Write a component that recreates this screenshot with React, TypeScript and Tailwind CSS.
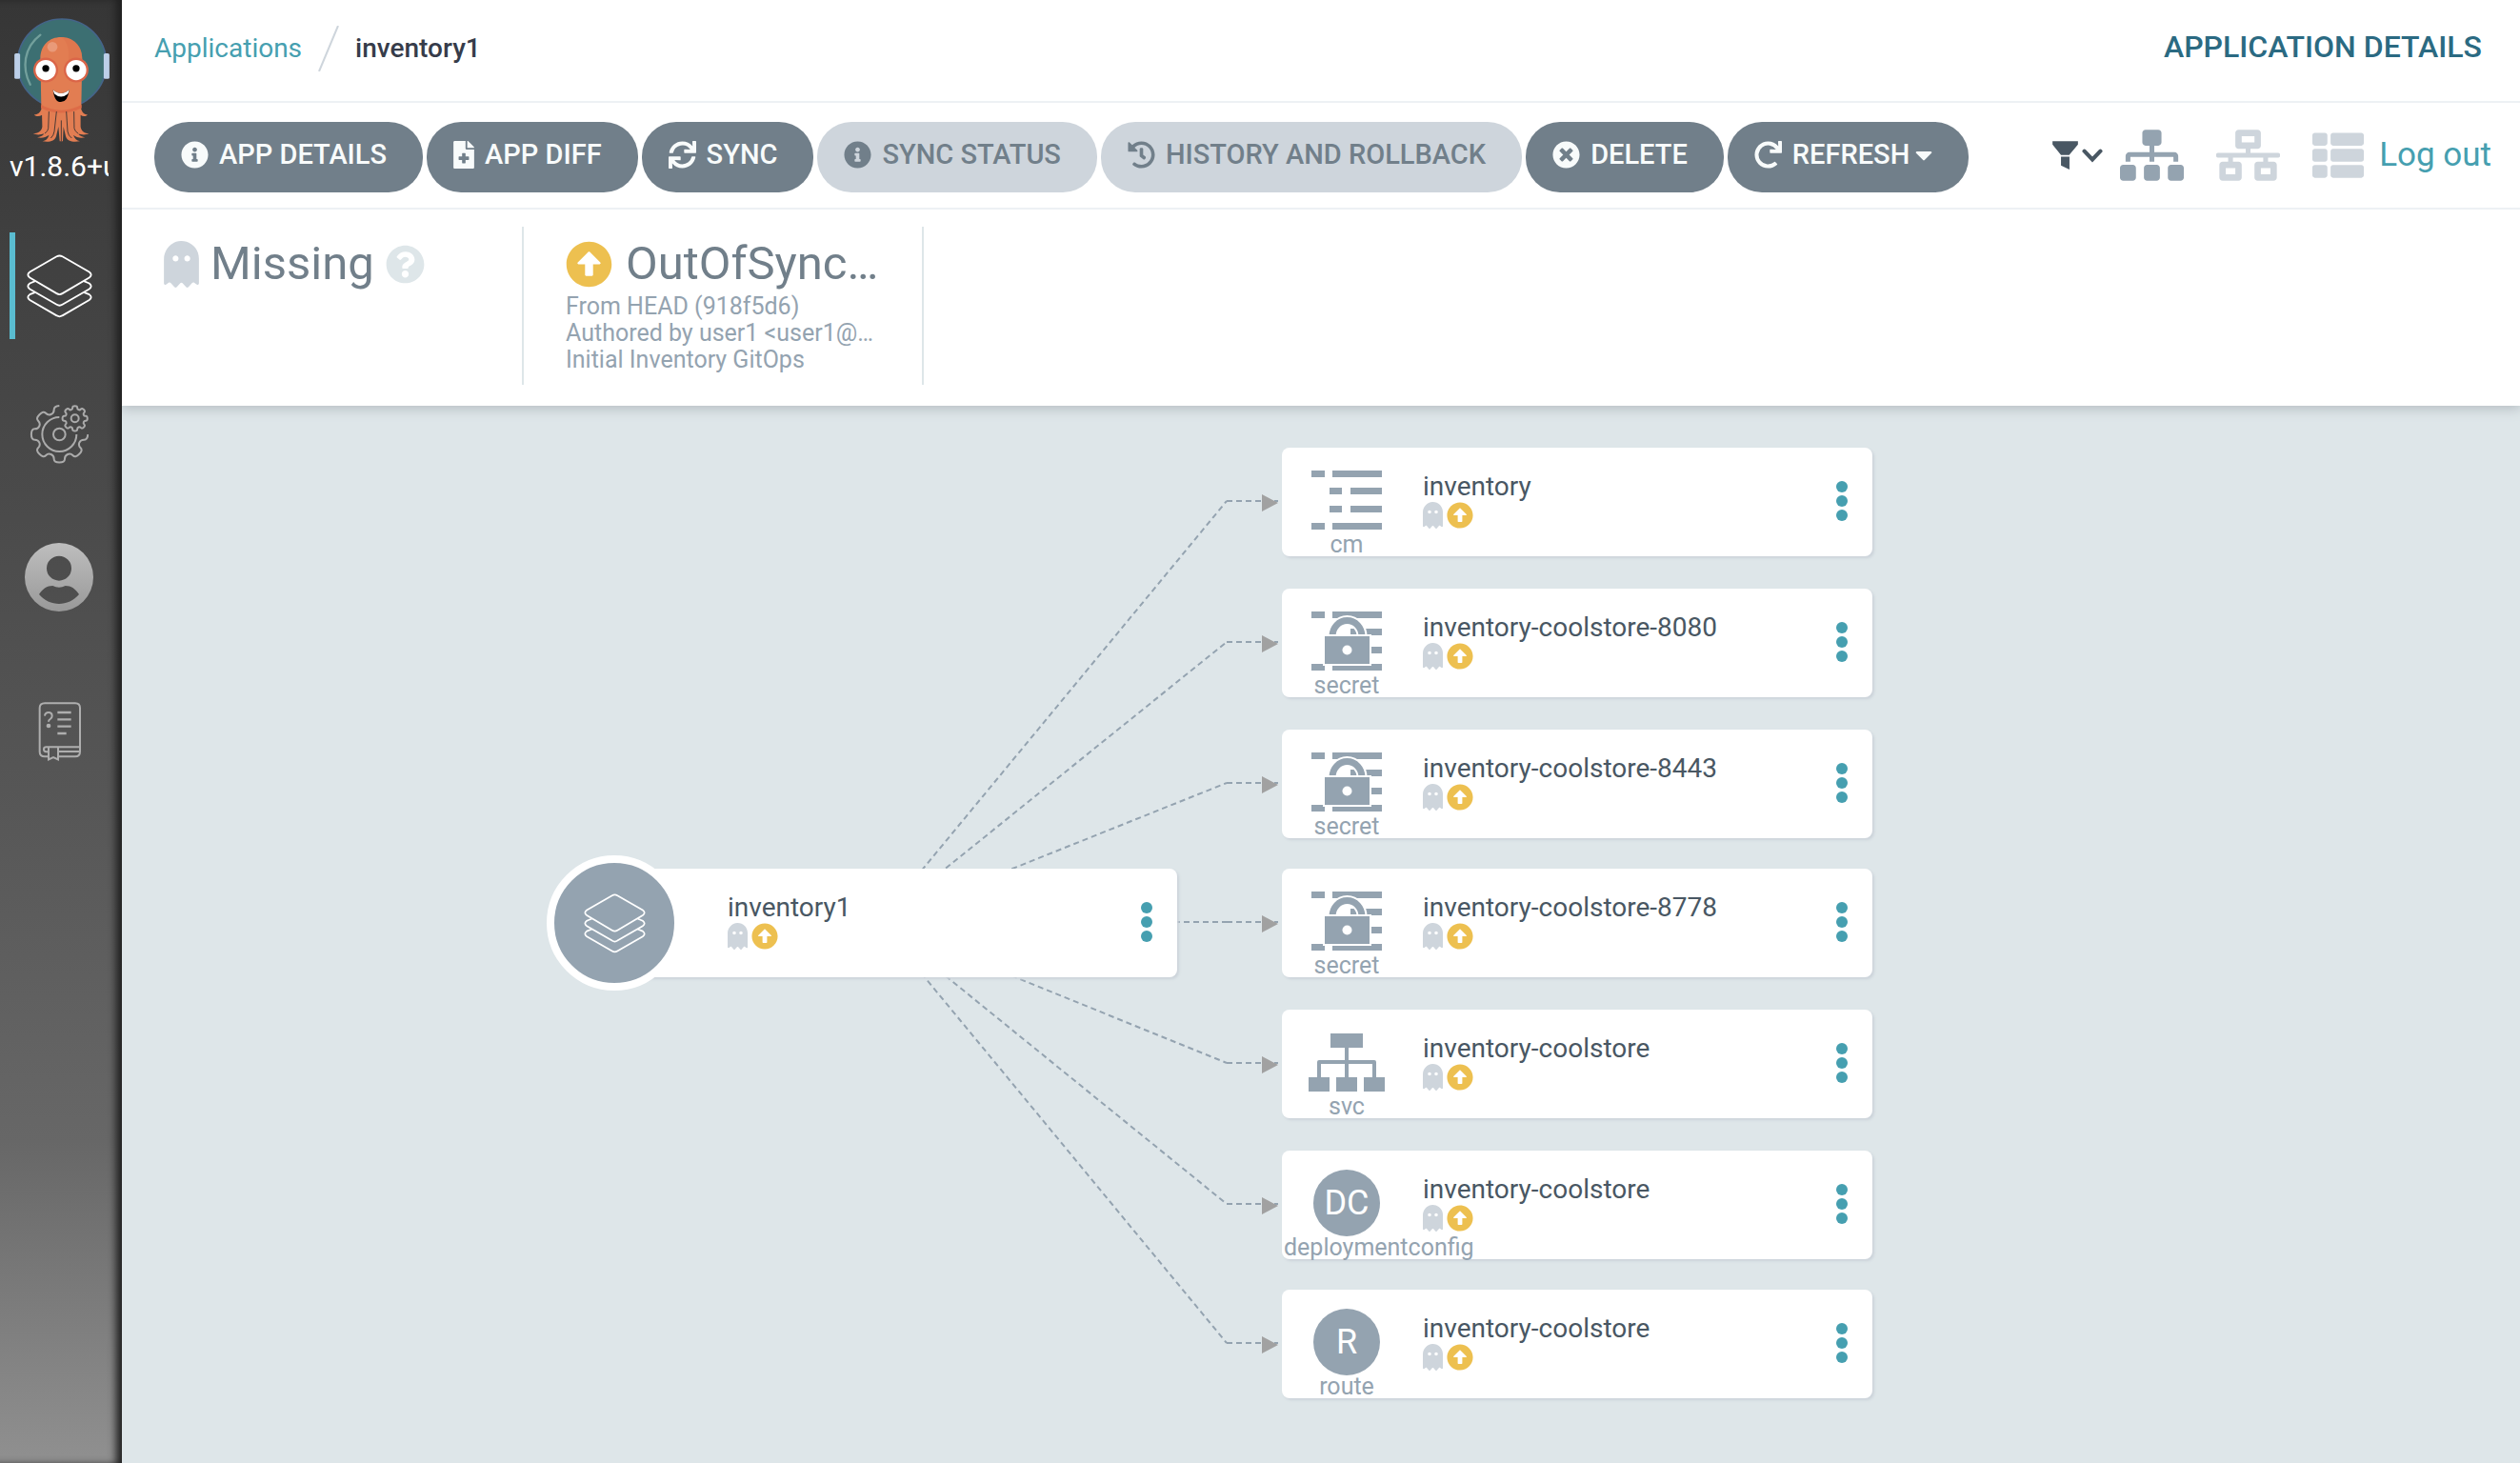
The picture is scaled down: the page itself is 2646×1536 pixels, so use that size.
import React from "react";
import {
  FaArrowAltCircleUp,
  FaCaretDown,
  FaFileMedical,
  FaGhost,
  FaHistory,
  FaInfoCircle,
  FaNetworkWired,
  FaQuestionCircle,
  FaRedo,
  FaSitemap,
  FaSync,
  FaThList,
  FaTimesCircle,
} from "react-icons/fa";

type Kind = "cm" | "secret" | "svc" | "DC" | "R";

interface Resource {
  name: string;
  label: string;
  kind: Kind;
  y: number;
}

const ROOT_X = 795;
const ROOT_Y = 542;
const EDGE_X = 1160;

const resources: Resource[] = [
  { name: "inventory", label: "cm", kind: "cm", y: 44 },
  { name: "inventory-coolstore-8080", label: "secret", kind: "secret", y: 192 },
  { name: "inventory-coolstore-8443", label: "secret", kind: "secret", y: 340 },
  { name: "inventory-coolstore-8778", label: "secret", kind: "secret", y: 486 },
  { name: "inventory-coolstore", label: "svc", kind: "svc", y: 634 },
  { name: "inventory-coolstore", label: "deploymentconfig", kind: "DC", y: 782 },
  { name: "inventory-coolstore", label: "route", kind: "R", y: 928 },
];

function ArgoLogo() {
  return (
    <svg viewBox="45 57 300 394" className="h-[131px] w-[100px] shrink-0" aria-hidden="true">
      <circle cx="195" cy="200" r="140" fill="#3c6f72" stroke="#456489" strokeWidth="5" />
      <path d="M127 110C74 150 68 215 95 267" fill="none" stroke="#73a09c" strokeWidth="7" strokeLinecap="round" />
      <rect x="45" y="168" width="18" height="81" rx="5" fill="#bccfe8" />
      <rect x="327" y="168" width="18" height="81" rx="5" fill="#bccfe8" />
      <path
        d="M127 185C127 142 156 117 192 117S259 142 259 185L256 345C260 356 266 362 276 362C270 368 261 368 254 363L254 400C256 415 268 421 280 422C270 427 256 426 246 422C252 430 260 433 268 434C254 437 240 434 231 426C235 438 242 443 252 446C230 449 212 447 207 430L200 400L198 446H188L184 400L177 430C172 447 154 449 133 446C145 443 151 438 154 426C144 434 132 437 117 434C126 433 134 430 139 422C128 426 116 427 104 422C118 421 131 415 133 400L132 363C124 368 114 368 107 362C118 362 126 356 130 345Z"
        fill="#e27d52"
      />
      <path d="M192 117C230 117 259 142 259 185L257 250L216 250V165C216 145 208 126 192 117Z" fill="#dd734c" opacity="0.6" />
      <path d="M129 331Q192 365 257 331V341Q192 372 129 341Z" fill="#dd6b47" />
      <path d="M154 352L152 405Q151 415 141 421M178 352L171 415Q169 428 160 436M209 352L213 415Q215 428 226 436M233 352L234 405Q236 415 246 421M193 380V446" fill="none" stroke="#4b3a35" strokeWidth="3" />
      <circle cx="165" cy="148" r="16" fill="#e99a79" />
      <circle cx="144" cy="221" r="39" fill="#db6548" />
      <circle cx="240" cy="221" r="39" fill="#db6548" />
      <circle cx="144" cy="221" r="32" fill="#fff" />
      <circle cx="240" cy="221" r="32" fill="#fff" />
      <circle cx="144" cy="216" r="11" fill="#000" />
      <circle cx="240" cy="216" r="11" fill="#000" />
      <path d="M167 283Q192 306 218 283Q213 322 192 322T167 283Z" fill="#000" />
      <path d="M167 283Q192 306 218 283Q216 292 213 297Q192 314 172 297Q169 292 167 283Z" fill="#fff" />
    </svg>
  );
}

function LayersIcon({ className }: { className: string }) {
  return (
    <svg viewBox="82 801 208 202" className={className} fill="none" stroke="#fff" strokeWidth="5.5" aria-hidden="true">
      <path d="M177 808Q186 803 195 808L280 857Q292 866 280 875L195 925Q186 931 177 925L92 875Q80 866 92 857Z" />
      <path d="M109 886L92 893Q80 902 92 911L177 960Q186 966 195 960L280 911Q292 902 280 893L263 886" />
      <path d="M109 921L92 928Q80 937 92 946L177 995Q186 1001 195 995L280 946Q292 937 280 928L263 921" />
    </svg>
  );
}

/** Smooth cog outline: a quadratic spline through the root and tip of every tooth. */
function cogPath(cx: number, cy: number, root: number, tip: number, from: number, to: number, closed: boolean) {
  const points: [number, number][] = [];
  for (let deg = from; deg <= to; deg += 45) {
    const ring: [number, number][] = [[root, -14], [tip, -11], [tip, 11], [root, 14]];
    for (const [r, offset] of ring) {
      const a = ((deg + offset) * Math.PI) / 180;
      points.push([cx + r * Math.cos(a), cy - r * Math.sin(a)]);
    }
  }
  const used = closed ? points : points.slice(2, -2);
  const mid = (a: [number, number], b: [number, number]) => `${(a[0] + b[0]) / 2} ${(a[1] + b[1]) / 2}`;
  const n = used.length;
  if (closed) {
    let d = `M${mid(used[n - 1], used[0])}`;
    used.forEach((p, i) => (d += `Q${p[0]} ${p[1]} ${mid(p, used[(i + 1) % n])}`));
    return d + "Z";
  }
  let d = `M${cx + tip * Math.cos((from * Math.PI) / 180)} ${cy - tip * Math.sin((from * Math.PI) / 180)}`;
  used.forEach((p, i) => {
    const end = i < n - 1 ? mid(p, used[i + 1]) : `${cx + tip * Math.cos((to * Math.PI) / 180)} ${cy - tip * Math.sin((to * Math.PI) / 180)}`;
    d += `Q${p[0]} ${p[1]} ${end}`;
  });
  return d;
}

function GearsIcon() {
  return (
    <svg viewBox="92 77 186 186" className="size-[62px]" fill="none" stroke="#ababab" strokeWidth="6" aria-hidden="true">
      <path d={cogPath(186, 170, 69, 90, 90, 360, false)} />
      <path d="M186 116A54 54 0 1 0 240 170" />
      <circle cx="186" cy="170" r="19" />
      <path d={cogPath(235, 120, 30, 40, 0, 315, true)} />
      <circle cx="235" cy="120" r="12" />
    </svg>
  );
}

function UserIcon() {
  return (
    <svg viewBox="78 510 216 216" className="size-[72px]" aria-hidden="true">
      <defs>
        <linearGradient id="userFill" x1="0" y1="0" x2="0" y2="1">
          <stop offset="0" stopColor="#bebebe" />
          <stop offset="1" stopColor="#999" />
        </linearGradient>
      </defs>
      <path
        fill="url(#userFill)"
        fillRule="evenodd"
        d="M186 510a108 108 0 1 0 0 216a108 108 0 1 0 0-216ZM186 551a39 39 0 1 1 0 78a39 39 0 1 1 0-78ZM123 672C134 655 148 645 166 645Q186 655 206 645C224 645 238 655 249 672C233 692 209 702 186 702S139 692 123 672Z"
      />
    </svg>
  );
}

function BookIcon() {
  return (
    <svg viewBox="121 1013 138 186" className="h-[62px] w-[46px]" fill="none" stroke="#aeaeae" strokeWidth="6" aria-hidden="true">
      <path d="M151 1185H142Q126 1185 126 1170V1032Q126 1017 142 1017H238Q253 1017 253 1032V1170Q253 1185 238 1185H187" />
      <path d="M253 1155H147Q139 1155 139 1162T147 1170H151M187 1169H253" />
      <path d="M154 1157V1194L169 1187L184 1194V1157" />
      <path d="M182 1046H225M182 1068H225M182 1090H225M182 1112H210" strokeWidth="7" />
      <path d="M142 1057Q143 1046 154 1046T165 1057Q165 1063 159 1067Q154 1070 154 1075" />
      <circle cx="154" cy="1088" r="7" fill="#aeaeae" stroke="none" />
    </svg>
  );
}

function FilterIcon() {
  return (
    <svg viewBox="45 87 81 91" className="h-[30px] w-[27px]" fill="#495763" aria-hidden="true">
      <path d="M45 88H126V98L98 132H72L45 98ZM72 137H99V178L72 165Z" />
    </svg>
  );
}

function ChevronIcon() {
  return (
    <svg viewBox="137 100 68 46" className="h-[15px] w-[22px]" fill="none" stroke="#495763" strokeWidth="13" strokeLinecap="round" aria-hidden="true">
      <path d="M145 108L171 135L197 108" />
    </svg>
  );
}

function ConfigRows({ locked }: { locked: boolean }) {
  return (
    <svg viewBox="31 24 75 62" className="h-[62px] w-[75px]" fill="#94a3b0" aria-hidden="true">
      <path d="M31 24h14v7h-14zM53 24h52v7h-52zM72 42h33v7h-33zM72 61h33v7h-33zM31 79h14v7h-14zM53 79h52v7h-52z" />
      {locked ? (
        <g>
          <path d="M53 50a15 16 0 0 1 31 0" fill="none" stroke="#fff" strokeWidth="11" />
          <path d="M53 50a15 16 0 0 1 31 0" fill="none" stroke="#94a3b0" strokeWidth="7" />
          <rect x="43" y="48" width="51" height="33" fill="#fff" />
          <rect x="45" y="50" width="47" height="29" />
          <circle cx="68.500" cy="64.500" r="5" fill="#fff" />
        </g>
      ) : (
        <path d="M50 42h13v7h-13zM50 61h13v7h-13z" />
      )}
    </svg>
  );
}

function ServiceIcon() {
  return (
    <svg viewBox="28 24 80 62" className="h-[62px] w-[80px]" fill="#94a3b0" aria-hidden="true">
      <path d="M51 25h34v15h-15v13h27q2 0 2 2v16h9v15h-22v-15h9v-14h-25v14h9v15h-22v-15h9v-14h-25v14h9v15h-22v-15h9v-16q0-2 2-2h27v-13h-15z" />
    </svg>
  );
}

function KindIcon({ kind }: { kind: Kind }) {
  if (kind === "cm") return <ConfigRows locked={false} />;
  if (kind === "secret") return <ConfigRows locked />;
  if (kind === "svc") return <ServiceIcon />;
  return (
    <span className="flex size-[70px] items-center justify-center rounded-full bg-[#94a3b0] text-4xl text-white">{kind}</span>
  );
}

function StatusIcons() {
  return (
    <span className="flex items-center gap-1">
      <FaGhost className="h-7 w-[21px] text-[#ced5dc]" />
      <FaArrowAltCircleUp className="size-7 text-[#edc050]" />
    </span>
  );
}

function NodeMenu({ name }: { name: string }) {
  return (
    <button type="button" aria-label={`Actions for ${name}`} className="flex flex-col gap-[3px] self-center pb-[3px]">
      <span className="size-3 rounded-full bg-[#469fb0]" />
      <span className="size-3 rounded-full bg-[#469fb0]" />
      <span className="size-3 rounded-full bg-[#469fb0]" />
    </button>
  );
}

function NodeBody({ name }: { name: string }) {
  return (
    <div className="flex grow flex-col pt-[25px]">
      <span className="text-[28px] leading-8 whitespace-nowrap text-[#495763]">{name}</span>
      <StatusIcons />
    </div>
  );
}

function ResourceNode({ resource }: { resource: Resource }) {
  return (
    <div
      className="absolute left-[1218px] flex h-[114px] w-[620px] gap-3 rounded-lg bg-white pr-[26px] shadow-[2px_2px_3px_#ccd3da]"
      style={{ top: resource.y }}
    >
      <div className="flex w-[136px] flex-col items-center pt-5">
        <span className="flex h-[70px] items-center justify-center">
          <KindIcon kind={resource.kind} />
        </span>
        <span className="w-[132px] text-center text-[25px] leading-6 whitespace-nowrap text-[#94a3b0]">{resource.label}</span>
      </div>
      <NodeBody name={resource.name} />
      <NodeMenu name={resource.name} />
    </div>
  );
}

function Edges() {
  return (
    <svg className="absolute top-0 left-0 h-[1110px] w-[1218px]" fill="none" aria-hidden="true">
      {resources.map((r) => {
        const y = r.y + 56;
        return (
          <g key={r.y}>
            <path d={`M${ROOT_X} ${ROOT_Y}L${EDGE_X} ${y}`} stroke="#94a3b0" strokeWidth="2" strokeDasharray="6 4" />
            <path d={`M${EDGE_X} ${y}H1214`} stroke="#94a3b0" strokeWidth="2" strokeDasharray="6 4" />
            <path d={`M1197 ${y - 7}L1214 ${y + 2}L1197 ${y + 11}Z`} fill="#a1a1a1" />
          </g>
        );
      })}
    </svg>
  );
}

const actions = [
  { label: "APP DETAILS", Icon: FaInfoCircle, size: "size-[29px]", enabled: true, caret: false },
  { label: "APP DIFF", Icon: FaFileMedical, size: "h-[29px] w-[22px]", enabled: true, caret: false },
  { label: "SYNC", Icon: FaSync, size: "size-[29px]", enabled: true, caret: false },
  { label: "SYNC STATUS", Icon: FaInfoCircle, size: "size-[29px]", enabled: false, caret: false },
  { label: "HISTORY AND ROLLBACK", Icon: FaHistory, size: "size-[29px]", enabled: false, caret: false },
  { label: "DELETE", Icon: FaTimesCircle, size: "size-[29px]", enabled: true, caret: false },
  { label: "REFRESH", Icon: FaRedo, size: "size-[29px]", enabled: true, caret: true },
];

function Toolbar() {
  return (
    <div className="flex h-28 items-center justify-between border-b-2 border-[#edf1f4] pr-[30px] pl-[34px]">
      <div className="flex gap-1 self-start pt-5">
        {actions.map(({ label, Icon, size, enabled, caret }) => (
          <button
            key={label}
            type="button"
            disabled={!enabled}
            className={
              "flex h-[74px] items-center rounded-[36px] pr-[38px] pb-[5px] pl-7 text-[29px] font-medium whitespace-nowrap " +
              (enabled ? "bg-[#717f8a] text-[#f8fbfb]" : "bg-[#ced5dc] text-[#717f8a]")
            }
          >
            <Icon className={`mr-[11px] shrink-0 ${size}`} />
            {label}
            {caret && <FaCaretDown className="ml-1.5 h-[29px] w-[18px] shrink-0" />}
          </button>
        ))}
      </div>
      <div className="flex items-center">
        <button type="button" aria-label="Filter" className="flex items-center gap-1">
          <FilterIcon />
          <ChevronIcon />
        </button>
        <button type="button" aria-label="Tree view" className="ml-[18px]">
          <FaSitemap className="h-[54px] w-[67px] text-[#94a3b0]" />
        </button>
        <button type="button" aria-label="Network view" className="ml-[34px]">
          <FaNetworkWired className="h-[54px] w-[67px] text-[#ced5dc]" />
        </button>
        <button type="button" aria-label="List view" className="ml-[34px]">
          <FaThList className="size-[54px] text-[#ced5dc]" />
        </button>
        <a href="#logout" className="ml-4 text-[35px] whitespace-nowrap text-[#469fb0]">Log out</a>
      </div>
    </div>
  );
}

function Sidebar() {
  return (
    <nav className="relative z-20 flex w-32 shrink-0 flex-col bg-[linear-gradient(to_bottom,#363636_0%,#565656_54%,#676767_78%,#909090_100%)] pt-[19px] shadow-[inset_-8px_0_9px_-2px_#202020]">
      <div className="flex flex-col pl-[15px]">
        <ArgoLogo />
      </div>
      <span className="ml-[10px] w-[104px] overflow-hidden pt-1 text-[30px] leading-[42px] whitespace-nowrap text-white">v1.8.6+u</span>
      <div className="mt-12 flex flex-col gap-11">
        <a href="#applications" aria-label="Applications" className="ml-[10px] flex h-28 w-[98px] items-center justify-center border-l-[6px] border-[#5abcd0]">
          <LayersIcon className="h-[67px] w-[69px]" />
        </a>
        <a href="#settings" aria-label="Settings" className="flex h-28 w-[124px] items-center justify-center">
          <GearsIcon />
        </a>
        <a href="#user" aria-label="User info" className="flex h-28 w-[124px] items-center justify-center pb-3">
          <UserIcon />
        </a>
        <a href="#docs" aria-label="Documentation" className="flex h-28 w-[126px] items-center justify-center">
          <BookIcon />
        </a>
      </div>
    </nav>
  );
}

export default function App() {
  return (
    <div className="flex min-h-screen font-[Roboto,sans-serif]">
      <Sidebar />
      <main className="flex min-w-0 grow flex-col bg-[#dee6e9]">
        <header className="z-10 bg-white shadow-[0_2px_12px_1px_#b4bcc1]">
          <div className="flex h-[108px] items-center justify-between border-b-2 border-[#edf1f4] pr-10 pb-1 pl-[34px]">
            <div className="flex items-center text-[28px]">
              <a href="#applications" className="text-[#469fb0]">Applications</a>
              <svg viewBox="0 0 22 48" className="mx-[17px] h-12 w-[22px]" stroke="#ced5dc" strokeWidth="2" aria-hidden="true">
                <path d="M1 48L21 0" />
              </svg>
              <span className="font-medium text-[#363c4a]">inventory1</span>
            </div>
            <h1 className="pb-1 text-[32px] font-medium text-[#2b6a82]">APPLICATION DETAILS</h1>
          </div>
          <Toolbar />
          <div className="flex h-[206px] pt-[18px] pb-[22px] pl-11">
            <section className="flex w-[378px] items-start border-r-2 border-[#dee6e9] pt-2">
              <div className="flex items-center text-[49px] leading-[62px] text-[#717f8a]">
                <FaGhost className="mr-3 h-[49px] w-[37px] text-[#ced5dc]" />
                Missing
                <FaQuestionCircle className="ml-3 size-[41px] text-[#dee6e9]" />
              </div>
            </section>
            <section className="w-[420px] border-r-2 border-[#dee6e9] px-11 pt-2">
              <div className="flex items-center text-[49px] leading-[62px] whitespace-nowrap text-[#717f8a]">
                <FaArrowAltCircleUp className="mr-3.5 size-[49px] text-[#edc050]" />
                OutOfSync…
              </div>
              <div className="text-[25px] leading-7 whitespace-nowrap text-[#94a3b0]">
                <p>From HEAD (918f5d6)</p>
                <p>Authored by user1 &lt;user1@…</p>
                <p>Initial Inventory GitOps</p>
              </div>
            </section>
          </div>
        </header>
        <div className="relative min-h-[1110px] grow overflow-hidden">
          <Edges />
          <div className="absolute top-[486px] left-[488px] flex h-[114px] w-[620px] rounded-lg bg-white pr-[26px] pl-[148px] shadow-[2px_2px_3px_#ccd3da]">
            <span className="absolute -top-[14px] -left-[42px] flex size-[142px] items-center justify-center rounded-full border-8 border-white bg-[#94a3b0]">
              <LayersIcon className="h-[63px] w-[65px]" />
            </span>
            <NodeBody name="inventory1" />
            <NodeMenu name="inventory1" />
          </div>
          {resources.map((r) => (
            <ResourceNode key={r.y} resource={r} />
          ))}
        </div>
      </main>
    </div>
  );
}
